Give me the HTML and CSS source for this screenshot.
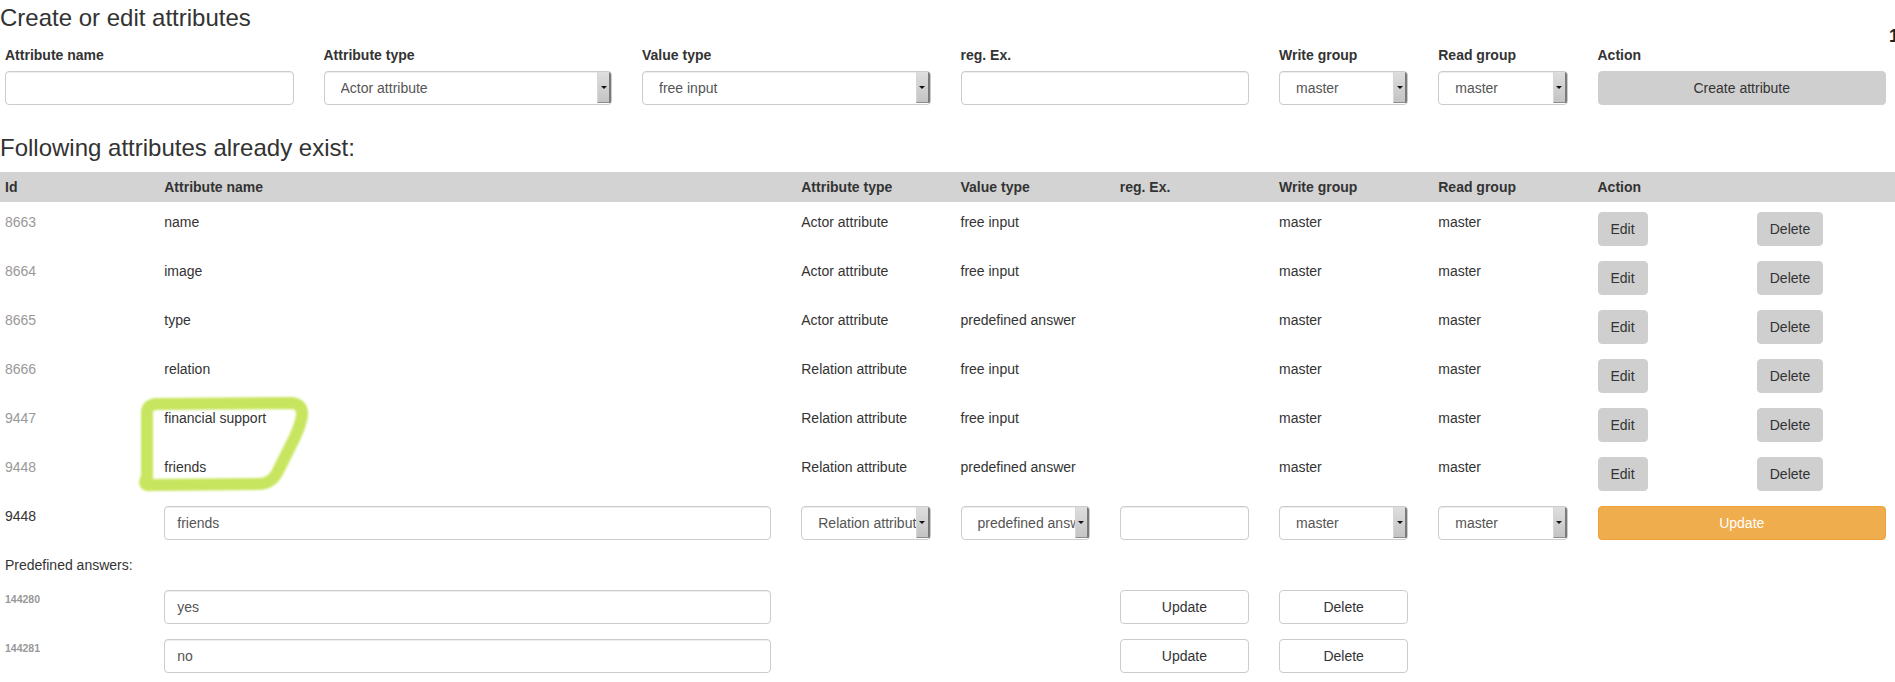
FILE: index.html
```html
<!DOCTYPE html>
<html lang="en">
<head>
<meta charset="utf-8">
<title>Attributes</title>
<link rel="stylesheet" href="styles.css">
</head>
<body>
<div class="page">
  <span class="edge-mark">1</span>

  <h3 class="title">Create or edit attributes</h3>
  <div class="row">
    <div class="col s2"><label class="form-label">Attribute name</label><input class="control" type="text" value=""></div>
    <div class="col s2"><label class="form-label">Attribute type</label><div class="control select"><span class="select-text">Actor attribute</span><span class="select-arrow"></span></div></div>
    <div class="col s2"><label class="form-label">Value type</label><div class="control select"><span class="select-text">free input</span><span class="select-arrow"></span></div></div>
    <div class="col s2"><label class="form-label">reg. Ex.</label><input class="control" type="text" value=""></div>
    <div class="col"><label class="form-label">Write group</label><div class="control select"><span class="select-text">master</span><span class="select-arrow"></span></div></div>
    <div class="col"><label class="form-label">Read group</label><div class="control select"><span class="select-text">master</span><span class="select-arrow"></span></div></div>
    <div class="col s2"><label class="form-label">Action</label><button class="btn btn-block">Create attribute</button></div>
  </div>

  <h3 class="title title-list">Following attributes already exist:</h3>
  <div class="row thead">
    <div class="col">Id</div>
    <div class="col s4">Attribute name</div>
    <div class="col">Attribute type</div>
    <div class="col">Value type</div>
    <div class="col">reg. Ex.</div>
    <div class="col">Write group</div>
    <div class="col">Read group</div>
    <div class="col">Action</div>
    <div class="col"></div>
  </div>

  <div class="row data-row">
    <div class="col id">8663</div><div class="col s4">name</div><div class="col">Actor attribute</div><div class="col">free input</div><div class="col"></div><div class="col">master</div><div class="col">master</div>
    <div class="col"><button class="btn">Edit</button></div><div class="col"><button class="btn">Delete</button></div>
  </div>
  <div class="row data-row">
    <div class="col id">8664</div><div class="col s4">image</div><div class="col">Actor attribute</div><div class="col">free input</div><div class="col"></div><div class="col">master</div><div class="col">master</div>
    <div class="col"><button class="btn">Edit</button></div><div class="col"><button class="btn">Delete</button></div>
  </div>
  <div class="row data-row">
    <div class="col id">8665</div><div class="col s4">type</div><div class="col">Actor attribute</div><div class="col">predefined answer</div><div class="col"></div><div class="col">master</div><div class="col">master</div>
    <div class="col"><button class="btn">Edit</button></div><div class="col"><button class="btn">Delete</button></div>
  </div>
  <div class="row data-row">
    <div class="col id">8666</div><div class="col s4">relation</div><div class="col">Relation attribute</div><div class="col">free input</div><div class="col"></div><div class="col">master</div><div class="col">master</div>
    <div class="col"><button class="btn">Edit</button></div><div class="col"><button class="btn">Delete</button></div>
  </div>
  <div class="row data-row">
    <div class="col id">9447</div><div class="col s4">financial support</div><div class="col">Relation attribute</div><div class="col">free input</div><div class="col"></div><div class="col">master</div><div class="col">master</div>
    <div class="col"><button class="btn">Edit</button></div><div class="col"><button class="btn">Delete</button></div>
  </div>
  <div class="row data-row">
    <div class="col id">9448</div><div class="col s4">friends</div><div class="col">Relation attribute</div><div class="col">predefined answer</div><div class="col"></div><div class="col">master</div><div class="col">master</div>
    <div class="col"><button class="btn">Edit</button></div><div class="col"><button class="btn">Delete</button></div>
  </div>

  <div class="row data-row">
    <div class="col">9448</div>
    <div class="col s4"><input class="control" type="text" value="friends"></div>
    <div class="col"><div class="control select"><span class="select-text">Relation attribute</span><span class="select-arrow"></span></div></div>
    <div class="col"><div class="control select"><span class="select-text">predefined answer</span><span class="select-arrow"></span></div></div>
    <div class="col"><input class="control" type="text" value=""></div>
    <div class="col"><div class="control select"><span class="select-text">master</span><span class="select-arrow"></span></div></div>
    <div class="col"><div class="control select"><span class="select-text">master</span><span class="select-arrow"></span></div></div>
    <div class="col s2"><button class="btn btn-block btn-warning">Update</button></div>
  </div>

  <div class="answers-label">Predefined answers:</div>

  <div class="row data-row">
    <div class="col small-id">144280</div>
    <div class="col s4"><input class="control" type="text" value="yes"></div>
    <div class="col at8"><button class="btn btn-block btn-default">Update</button></div>
    <div class="col"><button class="btn btn-block btn-default">Delete</button></div>
  </div>
  <div class="row data-row">
    <div class="col small-id">144281</div>
    <div class="col s4"><input class="control" type="text" value="no"></div>
    <div class="col at8"><button class="btn btn-block btn-default">Update</button></div>
    <div class="col"><button class="btn btn-block btn-default">Delete</button></div>
  </div>

  <svg class="highlight" width="1895" height="682" viewBox="0 0 1895 682" aria-hidden="true">
    <defs><filter id="soft" x="-10%" y="-10%" width="120%" height="120%"><feGaussianBlur stdDeviation="0.9"/></filter></defs>
    <path d="M147 478 L147 413 Q147 404 157 404 L292 403 Q303 404 302 416 Q300 428 290 447 L277 473 Q271 484 258 484 L150 485 Q143 486 146 479 Z" fill="none" stroke="#c8e55e" stroke-width="12" stroke-linejoin="round" stroke-linecap="round" filter="url(#soft)"/>
  </svg>
</div>
</body>
</html>
```

FILE: styles.css
```css
html, body {
  margin: 0;
  padding: 0;
  overflow: hidden;
  background: #fff;
}

body {
  font-family: "Liberation Sans", Arial, sans-serif;
  font-size: 14px;
  line-height: 20px;
  color: #333;
}

.page {
  position: relative;
  width: 1895px;
  height: 682px;
  overflow: hidden;
}

.edge-mark {
  position: absolute;
  left: 1889px;
  top: 26px;
  font-size: 18px;
  font-weight: 700;
  line-height: 20px;
  color: #222;
}

.title {
  font-size: 24px;
  font-weight: 400;
  line-height: 26px;
  margin: 5px 0 14px;
}

.title-list {
  margin: 30px 0 11px;
}

.row {
  display: grid;
  grid-template-columns: repeat(12, 159.25px);
  width: 1911px;
  margin-left: -10px;
}

.col {
  padding: 0 15px;
  min-width: 0;
  white-space: nowrap;
}

.s2 { grid-column: span 2; }
.s4 { grid-column: span 4; }
.at8 { grid-column: 8 / span 1; }

.form-label {
  display: block;
  font-weight: 700;
  margin-bottom: 6px;
}

.control {
  display: block;
  box-sizing: border-box;
  width: 100%;
  height: 34px;
  border: 1px solid #ccc;
  border-radius: 4px;
  background: #fff;
  box-shadow: inset 0 1px 1px rgba(0, 0, 0, 0.075);
  font-family: inherit;
  font-size: 14px;
  color: #555;
  margin: 0;
}

input.control {
  padding: 6px 12px;
  line-height: 20px;
}

.select {
  display: flex;
  align-items: stretch;
  padding-left: 16px;
  overflow: hidden;
}

.select-text {
  flex: 1 1 auto;
  min-width: 0;
  overflow: hidden;
  white-space: nowrap;
  line-height: 32px;
}

.select-arrow {
  flex: none;
  width: 11px;
  margin: 0 0 1px;
  background: linear-gradient(#dedede, #c4c4c4);
  border-left: 1px solid #d6d6d6;
  border-right: 2px solid #7a7a7a;
  border-bottom: 1px solid #8c8c8c;
  display: flex;
  align-items: center;
  justify-content: center;
}

.select-arrow::after {
  content: "";
  border-left: 3px solid transparent;
  border-right: 3px solid transparent;
  border-top: 3px solid #111;
}

.btn {
  display: inline-block;
  box-sizing: border-box;
  height: 34px;
  padding: 6px 12px;
  border: 1px solid #cfcfcf;
  border-radius: 4px;
  background: #cfcfcf;
  font-family: inherit;
  font-size: 14px;
  line-height: 20px;
  color: #333;
  text-align: center;
  margin: 0;
}

.btn-block {
  display: block;
  width: 100%;
}

.btn-warning {
  background: #f0ad4e;
  border-color: #eea236;
  color: #fff;
}

.btn-default {
  background: #fff;
  border-color: #ccc;
}

.thead {
  background: #d3d3d3;
  font-weight: 700;
  padding: 5px 0;
  margin-bottom: 10px;
}

.data-row {
  height: 34px;
  margin-bottom: 15px;
}

.id {
  color: #999;
}

.small-id {
  font-size: 10.5px;
  font-weight: 700;
  color: #999;
  line-height: 14px;
  padding-top: 2px;
}

.answers-label {
  padding-left: 5px;
  margin-bottom: 15px;
}

.highlight {
  position: absolute;
  left: 0;
  top: 0;
  pointer-events: none;
}
```
